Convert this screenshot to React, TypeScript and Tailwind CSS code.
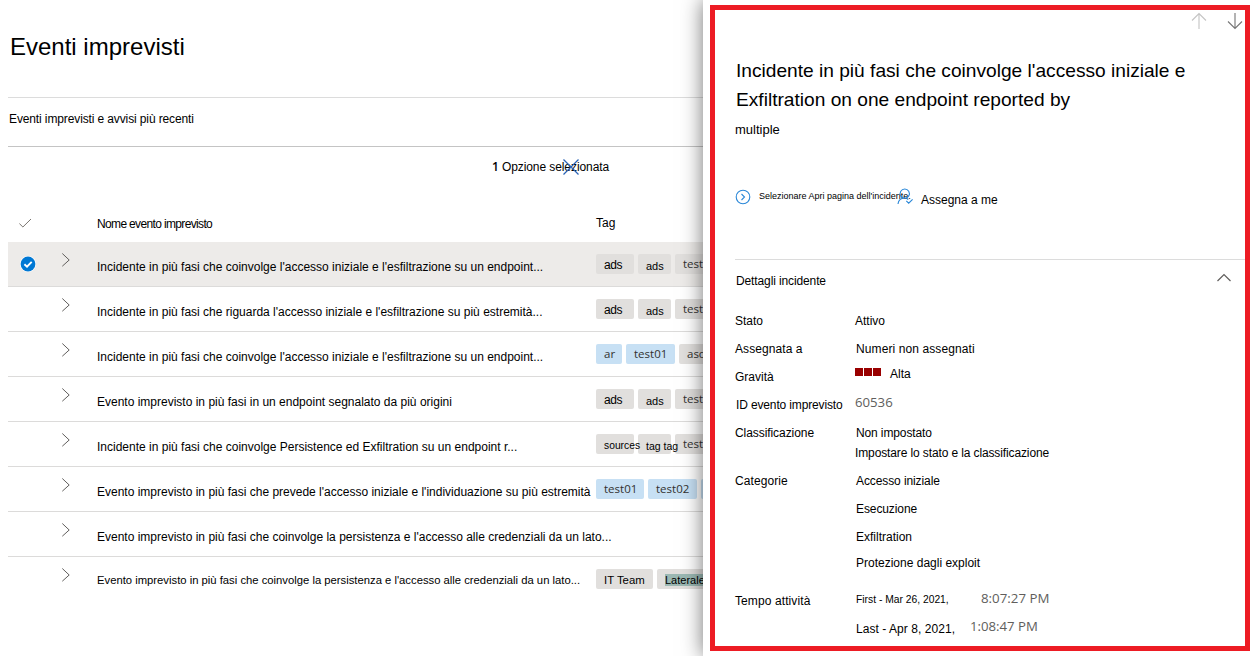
import React from "react";

type Tag = { text: string; box: string; tone?: "blue"; label: string };
type Row = { name: string; size?: string; selected?: boolean; tags: Tag[] };

const SANS = "font-['Liberation_Sans',sans-serif] text-black";
const SOFT = "font-['Open_Sans',sans-serif] text-[#323130]";

const ads: Tag[] = [
  { text: "ads", box: "w-[38px]", label: `${SANS} text-[12px] leading-[22px] tracking-[-0.4px]` },
  { text: "ads", box: "w-[33px]", label: `${SANS} text-[11px] leading-[25px]` },
  { text: "test", box: "w-[60px]", label: `${SOFT} text-[11.5px] leading-[20px]` },
];

const rows: Row[] = [
  { name: "Incidente in più fasi che coinvolge l'accesso iniziale e l'esfiltrazione su un endpoint...", selected: true, tags: ads },
  { name: "Incidente in più fasi che riguarda l'accesso iniziale e l'esfiltrazione su più estremità...", tags: ads },
  {
    name: "Incidente in più fasi che coinvolge l'accesso iniziale e l'esfiltrazione su un endpoint...",
    tags: [
      { text: "ar", box: "w-[26px]", tone: "blue", label: `${SOFT} text-[11.5px] leading-[20px]` },
      { text: "test01", box: "w-[49px]", tone: "blue", label: `${SOFT} text-[11.5px] leading-[20px]` },
      { text: "asd", box: "w-[50px]", label: `${SOFT} text-[11.5px] leading-[20px]` },
    ],
  },
  { name: "Evento imprevisto in più fasi in un endpoint segnalato da più origini", tags: ads },
  {
    name: "Incidente in più fasi che coinvolge Persistence ed Exfiltration su un endpoint r...",
    tags: [
      { text: "sources", box: "w-[38px]", label: `${SANS} text-[10.3px] leading-[23px]` },
      { text: "tag tag", box: "w-[33px]", label: `${SANS} z-10 text-[10.5px] leading-[25px]` },
      { text: "test", box: "w-[60px]", label: `${SOFT} text-[11.5px] leading-[20px]` },
    ],
  },
  {
    name: "Evento imprevisto in più fasi che prevede l'accesso iniziale e l'individuazione su più estremità",
    tags: [
      { text: "test01", box: "w-[48px]", tone: "blue", label: `${SOFT} text-[11.5px] leading-[20px]` },
      { text: "test02", box: "w-[49px]", tone: "blue", label: `${SOFT} text-[11.5px] leading-[20px]` },
      { text: "", box: "w-[48px]", tone: "blue", label: "" },
    ],
  },
  { name: "Evento imprevisto in più fasi che coinvolge la persistenza e l'accesso alle credenziali da un lato...", tags: [] },
  {
    name: "Evento imprevisto in più fasi che coinvolge la persistenza e l'accesso alle credenziali da un lato...",
    size: "text-[11.27px] leading-[47px]",
    tags: [
      { text: "IT Team", box: "w-[57px]", label: `${SANS} text-[11.4px] leading-[22px]` },
      { text: "Laterale", box: "w-[60px]", label: `${SANS} text-[11px] leading-[22px]` },
    ],
  },
];

function TagList({ tags }: { tags: Tag[] }) {
  return (
    <div className="flex gap-1 pt-3">
      {tags.map((t, i) => (
        <div
          key={i}
          className={`h-5 shrink-0 whitespace-nowrap rounded-[2px] pl-2 ${t.box} ${t.tone === "blue" ? "bg-[#c7e0f4]" : "bg-[#e1dfdd]"}`}
        >
          <span className={`relative block ${t.label}`}>
            {t.text === "Laterale" ? <mark className="bg-[#9bb8b3] text-black">{t.text}</mark> : t.text}
          </span>
        </div>
      ))}
    </div>
  );
}

function IncidentRow({ row, last }: { row: Row; last: boolean }) {
  return (
    <div
      className={`flex h-[45px] border-b ${last ? "border-transparent" : "border-[#dcdbda]"} ${row.selected ? "bg-[#edebe9]" : ""}`}
    >
      <div className="w-[53px] shrink-0 pl-3 pt-[14px]">
        {row.selected && (
          <svg width="16" height="16" viewBox="0 0 16 16">
            <circle cx="8" cy="8" r="8" fill="#fff" />
            <circle cx="8" cy="8" r="7.4" fill="#0078d4" />
            <path d="M4.4 8.2 7 10.6 11.7 5.8" fill="none" stroke="#fff" strokeWidth="1.9" />
          </svg>
        )}
      </div>
      <div className="w-9 shrink-0 pt-[11px]">
        <svg width="10" height="14" viewBox="0 0 10 14">
          <path d="M1.3 .5 8.2 7 1.3 13.2" fill="none" stroke="#605e5c" strokeWidth="1" />
        </svg>
      </div>
      <div className={`w-[499px] shrink-0 whitespace-nowrap ${row.size ?? "text-[12px] leading-[50px]"}`}>{row.name}</div>
      <TagList tags={row.tags} />
    </div>
  );
}

function IncidentList() {
  return (
    <main className="h-full w-[703px] shrink-0 overflow-hidden pl-2">
      <h1 className="h-[97px] pl-[2px] pt-8 text-[24px] leading-[30px]">Eventi imprevisti</h1>
      <p className="h-[50px] border-y border-t-[#dcdcdc] border-b-[#c4c4c4] pl-px text-[12px] leading-[43px] tracking-[-0.12px]">
        Eventi imprevisti e avvisi più recenti
      </p>
      <div className="relative h-[54px] pl-[484px] text-[12px] leading-[40px]">
        <span className="font-['Open_Sans',sans-serif] font-semibold">1</span>
        <span className="pl-[3px] tracking-[-0.08px]">Opzione selezionata</span>
        <svg className="absolute left-[554px] top-3" width="18" height="16" viewBox="0 0 18 16">
          <path d="M1.5 .5 16.5 15.5M16.5 .5 1.5 15.5" fill="none" stroke="#2b63b5" strokeWidth="1.3" />
        </svg>
      </div>
      <div className="flex h-[41px] text-[12px] leading-[46px]">
        <div className="w-[89px] shrink-0 pl-[11px] pt-[17px]">
          <svg width="14" height="11" viewBox="0 0 14 11">
            <path d="M.4 5.6 3.9 9 12 1" fill="none" stroke="#7a7570" strokeWidth="1" />
          </svg>
        </div>
        <div className="w-[499px] shrink-0 tracking-[-0.65px]">Nome evento imprevisto</div>
        <div className="leading-[44px]">Tag</div>
      </div>
      {rows.map((row, i) => (
        <IncidentRow key={i} row={row} last={i === rows.length - 1} />
      ))}
    </main>
  );
}

const details: { label: string; labelClass?: string; height: string; value: React.ReactNode }[] = [
  { label: "Stato", height: "h-7", value: "Attivo" },
  { label: "Assegnata a", labelClass: "tracking-[0.08px]", height: "h-7", value: <div className="pl-px tracking-[0.1px]">Numeri non assegnati</div> },
  {
    label: "Gravità",
    height: "h-7",
    value: (
      <div className="flex h-[18px] items-center">
        <div className="flex gap-px">
          <i className="size-2 bg-[#990000]" />
          <i className="size-2 bg-[#990000]" />
          <i className="size-2 bg-[#990000]" />
        </div>
        <span className="pl-[9px] pt-[3px]">Alta</span>
      </div>
    ),
  },
  {
    label: "ID evento imprevisto",
    labelClass: "pl-px tracking-[-0.14px]",
    height: "h-7",
    value: <div className="font-['Open_Sans',sans-serif] text-[13.2px] leading-[22px] text-[#605e5c]">60536</div>,
  },
  {
    label: "Classificazione",
    labelClass: "tracking-[-0.07px]",
    height: "h-12",
    value: (
      <>
        <div className="pl-px tracking-[-0.12px]">Non impostato</div>
        <div className="-mt-2 tracking-[-0.12px]">Impostare lo stato e la classificazione</div>
      </>
    ),
  },
  {
    label: "Categorie",
    labelClass: "tracking-[0.08px]",
    height: "h-[120px]",
    value: (
      <div className="pl-px">
        <div className="tracking-[-0.1px]">Accesso iniziale</div>
        <div className="tracking-[-0.1px]">Esecuzione</div>
        <div>Exfiltration</div>
        <div className="-mt-0.5">Protezione dagli exploit</div>
      </div>
    ),
  },
  {
    label: "Tempo attività",
    labelClass: "tracking-[0.1px]",
    height: "h-14",
    value: (
      <>
        <div className="flex h-7 pl-px">
          <span className="w-[125px] text-[10.3px] leading-[25px]">First - Mar 26, 2021,</span>
          <span className="font-['Open_Sans',sans-serif] text-[13.3px] leading-[22px] text-[#605e5c]">8:07:27 PM</span>
        </div>
        <div className="flex h-7 pl-px">
          <span className="w-[114px] tracking-[0.05px]">Last - Apr 8, 2021,</span>
          <span className="font-['Open_Sans',sans-serif] text-[13.2px] leading-[22px] text-[#605e5c]">1:08:47 PM</span>
        </div>
      </>
    ),
  },
];

function Arrow({ down }: { down?: boolean }) {
  return (
    <svg width="16" height="18" viewBox="0 0 16 18" className={down ? "rotate-180" : ""}>
      <path d="M8 17V1.5M1 8.5 8 1.5 15 8.5" fill="none" stroke={down ? "#767676" : "#c4c4c4"} strokeWidth="1.1" />
    </svg>
  );
}

function DetailPanel() {
  return (
    <aside className="relative h-full w-[552px] shrink-0 bg-white pl-[7px] pt-[5px] shadow-[0_0_20px_rgba(0,0,0,0.55)]">
      <div className="h-[646px] w-[540px] border-[5px] border-[#ed1c24] pl-5">
        <div className="flex h-[46px] justify-end gap-5 pr-[2.5px] pt-[2px]">
          <Arrow />
          <Arrow down />
        </div>
        <h2 className="h-[58px] whitespace-nowrap pl-px text-[19.15px] leading-[29px]">
          Incidente in più fasi che coinvolge l'accesso iniziale e<br />
          Exfiltration on one endpoint reported by
        </h2>
        <p className="h-[70px] text-[13px] leading-[31px]">multiple</p>
        <div className="relative flex h-[75px] whitespace-nowrap">
          <svg width="16" height="16" viewBox="0 0 16 16" className="mt-[5px]">
            <circle cx="8" cy="8" r="6.8" fill="none" stroke="#2b88d8" strokeWidth="1.1" />
            <path d="M6.5 5 9.5 8 6.5 11" fill="none" stroke="#2b88d8" strokeWidth="1.1" />
          </svg>
          <span className="w-[162px] pl-2 text-[9px] leading-[24px]">Selezionare Apri pagina dell'incidente.</span>
          <span className="pl-2 text-[12px] leading-[32px]">Assegna a me</span>
          <svg className="absolute left-[162px] top-[4px]" width="17" height="17" viewBox="0 0 17 17">
            <path
              d="M1 16C1.4 12.2 4 10.2 7.5 10.2M7.7 10.2A4.6 4.6 0 1 1 7.8 10.2C9.2 10.2 10.4 10.7 11.3 11.5M9.3 12.9 11.7 15.2 15.6 11.3"
              fill="none"
              stroke="#2b88d8"
              strokeWidth="1.1"
            />
          </svg>
        </div>
        <div className="flex h-12 justify-between border-t border-[#dcdcdc] pl-px pr-[13px] text-[12px] leading-[43px] tracking-[-0.12px]">
          <span>Dettagli incidente</span>
          <svg width="16" height="9" viewBox="0 0 16 9" className="mt-[13px]">
            <path d="M1.5 8 8 1.5 14.5 8" fill="none" stroke="#605e5c" strokeWidth="1.2" />
          </svg>
        </div>
        <dl className="text-[12px] leading-7">
          {details.map((d) => (
            <div key={d.label} className={`flex whitespace-nowrap ${d.height}`}>
              <dt className={`w-[120px] shrink-0 ${d.labelClass ?? ""}`}>{d.label}</dt>
              <dd>{d.value}</dd>
            </div>
          ))}
        </dl>
      </div>
    </aside>
  );
}

export default function App() {
  return (
    <div className="flex h-[656px] w-[1255px] overflow-hidden bg-white font-['Liberation_Sans',sans-serif] text-black">
      <IncidentList />
      <DetailPanel />
    </div>
  );
}
